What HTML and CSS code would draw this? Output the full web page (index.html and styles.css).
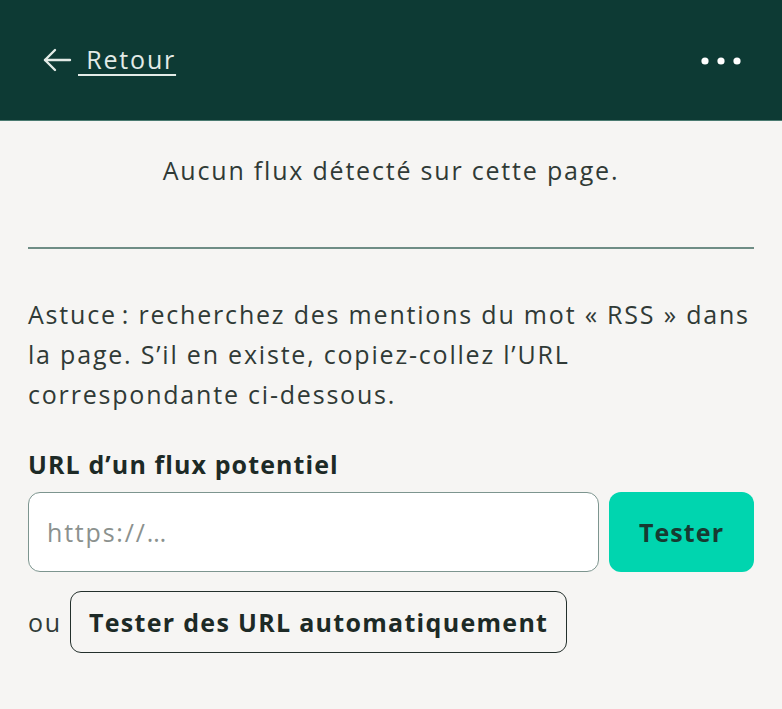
FILE: index.html
```html
<!DOCTYPE html>
<html lang="fr">
<head>
<meta charset="utf-8">
<title>Flux</title>
<link rel="stylesheet" href="styles.css">
</head>
<body>
<header class="topbar">
  <a class="back" href="#">
    <svg class="back-icon" width="30" height="26" viewBox="0 0 30 26" fill="none" stroke="currentColor" stroke-width="2.4" stroke-linecap="round" stroke-linejoin="round">
      <path d="M28 13H3"/>
      <path d="M13 3L3 13l10 10"/>
    </svg>
    <span class="back-label">&nbsp;Retour</span>
  </a>
  <button class="more" aria-label="Plus">
    <svg width="40" height="10" viewBox="0 0 40 10" fill="currentColor">
      <circle cx="4" cy="5" r="3.6"/>
      <circle cx="20" cy="5" r="3.6"/>
      <circle cx="36" cy="5" r="3.6"/>
    </svg>
  </button>
</header>
<main class="content">
  <p class="status">Aucun flux détecté sur cette page.</p>
  <hr class="divider">
  <p class="tip">Astuce&#8239;: recherchez des mentions du mot «&nbsp;RSS&nbsp;» dans la page. S’il en existe, copiez-collez l’URL correspondante ci-dessous.</p>
  <label class="field-label" for="url">URL d’un flux potentiel</label>
  <div class="field-row">
    <input id="url" class="url-input" type="text" placeholder="https://…">
    <button class="btn-primary">Tester</button>
  </div>
  <div class="alt-row">
    <span class="alt-text">ou</span>
    <button class="btn-outline">Tester des URL automatiquement</button>
  </div>
</main>
</body>
</html>
```

FILE: styles.css
```css
* { box-sizing: border-box; }
html, body {
  margin: 0;
  padding: 0;
  background: #f6f5f3;
}
body {
  font-family: "Open Sans", "Noto Sans", sans-serif;
  font-size: 25px;
  letter-spacing: 1.8px;
  color: #303a36;
}
.topbar {
  height: 121px;
  background: #0d3a34;
  border-bottom: 1px solid #4a7a70;
  display: flex;
  align-items: center;
  justify-content: space-between;
  padding: 0 41px 0 42px;
}
.back {
  display: flex;
  align-items: center;
  color: #e3ebe7;
  text-decoration: none;
}
.back-icon { display: block; }
.back-label {
  margin-left: 6px;
  text-decoration: underline;
  text-decoration-thickness: 2px;
  text-underline-offset: 5px;
  font-size: 25px;
  line-height: 1;
  margin-top: -2px;
}
.more {
  background: none;
  border: 0;
  padding: 0;
  color: #ffffff;
  display: flex;
  margin-top: 2px;
}
.content {
  padding: 0 28px;
}
.status {
  margin: 29px 0 0;
  text-align: center;
  line-height: 40px;
}
.divider {
  margin: 57px 0 0;
  border: 0;
  height: 2px;
  background: #6f8d85;
}
.tip {
  margin: 45px 0 0;
  line-height: 40px;
}
.field-label {
  display: block;
  margin-top: 30px;
  font-weight: 700;
  letter-spacing: 1.1px;
  line-height: 40px;
  color: #1d2a26;
}
.field-row {
  display: flex;
  gap: 10px;
  margin-top: 8px;
}
.url-input {
  flex: 1;
  height: 80px;
  border: 1.5px solid #7d958f;
  border-radius: 12px;
  background: #ffffff;
  padding: 0 18px;
  font-family: inherit;
  font-size: 25px;
  letter-spacing: 1.8px;
  color: #303a36;
}
.url-input::placeholder { color: #8b918e; }
.btn-primary {
  width: 145px;
  height: 80px;
  border: 0;
  border-radius: 12px;
  background: #00d5af;
  font-family: inherit;
  font-size: 25px;
  font-weight: 700;
  letter-spacing: 1.1px;
  color: #173a31;
}
.alt-row {
  display: flex;
  align-items: center;
  gap: 8px;
  margin-top: 19px;
}
.btn-outline {
  height: 62px;
  padding: 0 18px;
  border: 1.5px solid #24302c;
  border-radius: 11px;
  background: transparent;
  font-family: inherit;
  font-size: 25px;
  font-weight: 700;
  letter-spacing: 1.3px;
  color: #1d2a26;
}
```
